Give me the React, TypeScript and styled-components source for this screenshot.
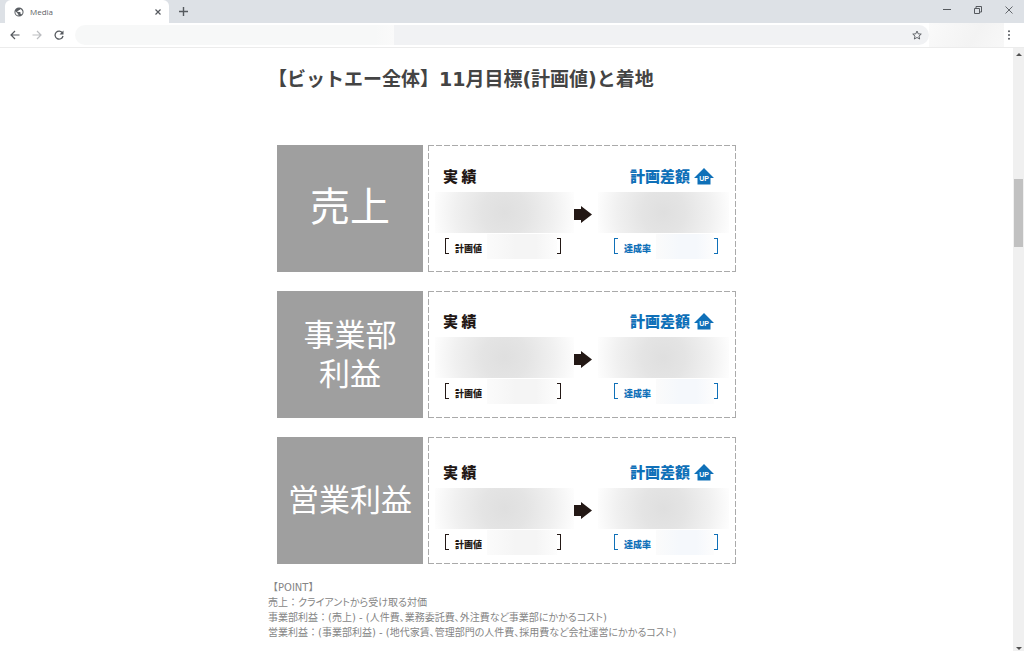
import React from 'react';
import styled, { createGlobalStyle } from 'styled-components';

const GlobalStyle = createGlobalStyle`
  *, *::before, *::after { box-sizing: border-box; }
  html, body, #root { height: 100%; margin: 0; }
  body { background: #fff; font-family: "Noto Sans CJK JP", sans-serif; }
  button, input { font: inherit; }
`;

const Browser = styled.div`
  display: flex;
  flex-direction: column;
  height: 100%;
  overflow: hidden;
`;

const TabStrip = styled.header`
  display: flex;
  align-items: stretch;
  height: 23px;
  flex: none;
  padding-left: 5px;
  background: #dde1e6;
`;

const Tab = styled.div`
  display: flex;
  align-items: center;
  gap: 6px;
  width: 164px;
  padding: 0 5px 0 9px;
  border-radius: 6px 6px 0 0;
  background: #fff;
`;

const TabTitle = styled.span`
  flex: 1;
  font: 8px/12px "Open Sans", sans-serif;
  color: #5f6368;
`;

const IconButton = styled.button<{ $width: number; $color?: string }>`
  display: flex;
  align-items: center;
  justify-content: center;
  flex: none;
  width: ${(p) => p.$width}px;
  height: 100%;
  padding: 0;
  border: 0;
  background: none;
  color: ${(p) => p.$color ?? '#55595e'};
`;

const WindowControls = styled.div`
  display: flex;
  height: 20px;
  margin-left: auto;
`;

const Toolbar = styled.nav`
  display: flex;
  align-items: center;
  height: 25px;
  flex: none;
  padding-left: 4px;
  border-bottom: 1px solid #ececec;
  background: #fff;
`;

const AddressBar = styled.div`
  display: flex;
  align-items: center;
  flex: 1;
  height: 20px;
  margin-left: 5px;
  border-radius: 10px;
  overflow: hidden;
  background: linear-gradient(90deg, #f7f8f8 300px, #fafafa 319px, #f1f2f4 319px);
`;

const AddressInput = styled.input`
  flex: 1;
  min-width: 0;
  border: 0;
  padding: 0 8px;
  background: none;
`;

const Extensions = styled.div`
  align-self: stretch;
  width: 75px;
  background: linear-gradient(120deg, #fafafa, #f3f3f3 60%, #f8f8f8);
`;

const Viewport = styled.div`
  display: flex;
  flex: 1;
  min-height: 0;
`;

const Page = styled.main`
  flex: 1;
  min-width: 0;
  overflow: hidden;
`;

const Article = styled.article`
  max-width: 477px;
  margin: 0 auto;
`;

const Heading = styled.h1`
  margin: 0;
  padding-top: 16px;
  font: bold 19px/30px "DejaVu Sans", "Noto Sans CJK JP", sans-serif;
  white-space: nowrap;
  color: #444;
`;

const Rows = styled.div`
  display: flex;
  flex-direction: column;
  gap: 19px;
  padding: 51px 9px 16px;
`;

const Row = styled.section`
  display: flex;
  gap: 5px;
`;

const Label = styled.h2<{ $size: number }>`
  display: flex;
  align-items: center;
  justify-content: center;
  flex: none;
  width: 146px;
  height: 127px;
  margin: 0;
  padding-bottom: ${(p) => (p.$size > 31 ? 8 : 6)}px;
  background: #9f9f9f;
  color: #fff;
  font-size: ${(p) => p.$size}px;
  line-height: 39px;
  font-weight: 400;
  text-align: center;
  white-space: pre-line;
`;

const across = 'repeating-linear-gradient(90deg, #aaa 0 6px, #fff 6px 8px)';
const down = 'repeating-linear-gradient(180deg, #aaa 0 6px, #fff 6px 8px)';

const Panel = styled.div<{ $top: number }>`
  display: flex;
  align-items: flex-start;
  flex: 1;
  padding: ${(p) => p.$top}px 7px 0;
  background:
    ${across} 0 0 / 100% 1px no-repeat,
    ${across} 0 100% / 100% 1px no-repeat,
    ${down} 0 0 / 1px 100% no-repeat,
    ${down} 100% 0 / 1px 100% no-repeat;
`;

const Figure = styled.div<{ $color: string; $basis: number }>`
  flex: 1 1 ${(p) => p.$basis}px;
  color: ${(p) => p.$color};
`;

const FigureTitle = styled.h3<{ $indent: number }>`
  display: flex;
  align-items: center;
  gap: 4px;
  height: 20px;
  margin: 0;
  padding-left: ${(p) => p.$indent}px;
  font-size: 15px;
  line-height: 20px;
  font-weight: 900;
  white-space: nowrap;
`;

const HiddenAmount = styled.div`
  height: 41px;
  margin-top: 6px;
  background: radial-gradient(ellipse 54% 190% at 50% 50%, #dfdfdf, #e4e4e4 30%, #f0f0f0 65%, #fbfbfb 90%, #fff);
`;

const Bracket = styled.div<{ $indent: number; $width: number }>`
  display: flex;
  align-items: center;
  width: ${(p) => p.$width}px;
  height: 16px;
  margin: 5px 0 0 ${(p) => p.$indent}px;
`;

const Edge = styled.span<{ $side: 'left' | 'right' }>`
  width: 4px;
  height: 100%;
  border: 1px solid currentColor;
  border-${(p) => (p.$side === 'left' ? 'right' : 'left')}: 0;
`;

const BracketText = styled.span`
  padding: 5px 5px 0 6px;
  font-size: 9px;
  line-height: 12px;
  font-weight: 900;
  white-space: nowrap;
`;

const HiddenRate = styled.span<{ $tint: string }>`
  flex: 1;
  height: 25px;
  background: linear-gradient(90deg, #fbfbfb, ${(p) => p.$tint} 40%, ${(p) => p.$tint} 70%, #fdfdfd);
`;

const ArrowCell = styled.div`
  flex: none;
  width: 24px;
  padding-top: 38px;
`;

const Notes = styled.div`
  font: 10px/15px "DejaVu Sans", "Noto Sans CJK JP", sans-serif;
  color: #858585;
`;

const Note = styled.p`
  margin: 0;
  font-feature-settings: "palt";
`;

const Term = styled.span`
  font-feature-settings: normal;
`;

const Scrollbar = styled.div`
  display: flex;
  flex-direction: column;
  align-items: center;
  flex: none;
  width: 11px;
  padding: 4px 0 0;
  background: #f0f0f0;
`;

const Thumb = styled.div`
  width: 9px;
  height: 68px;
  margin: 122px 0 auto;
  background: #c1c1c1;
`;

const Globe = () => (
  <svg width="10" height="10" viewBox="0 0 24 24" aria-hidden="true">
    <path fill="#5a5e63" d="M12 1a11 11 0 1 0 0 22 11 11 0 0 0 0-22zm-1 19.5A8.6 8.6 0 0 1 3.400 12c0-.6.1-1.200.2-1.800L9 15.500v1c0 1.200 1 2 2 2zm7.500-2.700c-.3-.9-1.100-1.500-2.100-1.500h-1v-3.200c0-.6-.5-1-1-1H8V10h2c.6 0 1-.5 1-1V7h2.200c1.200 0 2-1 2-2v-.5a8.600 8.600 0 0 1 3.300 13.300z" />
  </svg>
);

const strokeIcon = { fill: 'none', stroke: 'currentColor', 'aria-hidden': true } as const;

const UpBadge = () => (
  <svg width="20" height="17" viewBox="0 0 20 17" role="img" aria-label="UP">
    <path fill="#0f70b8" d="M10 0 20 10h-3.500v6.500h-13V10H0z" />
    <text x="10" y="13" fontFamily="Liberation Sans" fontSize="7" fontWeight="700" textAnchor="middle" fill="#fff">UP</text>
  </svg>
);

const ArrowIcon = () => (
  <svg width="18" height="17" viewBox="0 0 18 17" aria-hidden="true">
    <path fill="#231815" d="M0 3h7V0l11 8.500L7 17v-3H0z" />
  </svg>
);

const results = [
  { label: '売上', size: 40, top: 21 },
  { label: '事業部\n利益', size: 31, top: 20 },
  { label: '営業利益', size: 31, top: 25 },
];

const notes = [
  { term: '【POINT】', text: '' },
  { term: '売上：', text: 'クライアントから受け取る対価' },
  { term: '事業部利益：', text: '(売上) - (人件費、業務委託費、外注費など事業部にかかるコスト)' },
  { term: '営業利益：', text: '(事業部利益) - (地代家賃、管理部門の人件費、採用費など会社運営にかかるコスト)' },
];

export default function App() {
  return (
    <Browser>
      <GlobalStyle />
      <TabStrip>
        <Tab>
          <Globe />
          <TabTitle>Media</TabTitle>
          <IconButton $width={12} aria-label="Close tab">
            <svg width="6" height="6" viewBox="0 0 6 6" {...strokeIcon}><path d="M.5.5l5 5M5.500.5l-5 5" strokeWidth="1.200" /></svg>
          </IconButton>
        </Tab>
        <IconButton $width={29} aria-label="New tab">
          <svg width="9" height="9" viewBox="0 0 9 9" {...strokeIcon}><path d="M4.500 0v9M0 4.500h9" strokeWidth="1.400" /></svg>
        </IconButton>
        <WindowControls>
          <IconButton $width={31} aria-label="Minimize">
            <svg width="8" height="8" viewBox="0 0 8 8" {...strokeIcon}><path d="M0 3.500h8" /></svg>
          </IconButton>
          <IconButton $width={31} aria-label="Restore">
            <svg width="8" height="8" viewBox="0 0 8 8" {...strokeIcon}><path d="M.5 2.500h5v5h-5zM2 2V.5h5.500v5.500H6" /></svg>
          </IconButton>
          <IconButton $width={31} aria-label="Close">
            <svg width="8" height="8" viewBox="0 0 8 8" {...strokeIcon}><path d="M.5.5l7 7M7.500.5l-7 7" strokeWidth=".9" /></svg>
          </IconButton>
        </WindowControls>
      </TabStrip>
      <Toolbar>
        <IconButton $width={22} aria-label="Back">
          <svg width="10" height="10" viewBox="0 0 10 10" {...strokeIcon}><path d="M9.500 5H1M5 1 1 5l4 4" strokeWidth="1.200" /></svg>
        </IconButton>
        <IconButton $width={22} $color="#bbbdc0" aria-label="Forward">
          <svg width="10" height="10" viewBox="0 0 10 10" {...strokeIcon}><path d="M.5 5H9M5 1l4 4-4 4" strokeWidth="1.200" /></svg>
        </IconButton>
        <IconButton $width={22} aria-label="Reload">
          <svg width="10" height="10" viewBox="0 0 10 10" {...strokeIcon}><path d="M8.500 3A4 4 0 1 0 9 6" strokeWidth="1.300" /><path d="M9.500.5v4h-4z" fill="currentColor" stroke="none" /></svg>
        </IconButton>
        <AddressBar>
          <AddressInput aria-label="Address" />
          <IconButton $width={24} aria-label="Bookmark">
            <svg width="10" height="10" viewBox="0 0 24 24" {...strokeIcon}><path d="m12 2.500 2.900 6.700 7.300.6-5.500 4.800 1.700 7.100L12 17.900l-6.400 3.800 1.700-7.100L1.800 9.800l7.300-.6z" strokeWidth="2.200" /></svg>
          </IconButton>
        </AddressBar>
        <Extensions />
        <IconButton $width={20} aria-label="Menu">
          <svg width="20" height="10" viewBox="0 0 20 10" fill="currentColor" aria-hidden="true"><circle cx="5" cy="1.200" r="1" /><circle cx="5" cy="5" r="1" /><circle cx="5" cy="8.800" r="1" /></svg>
        </IconButton>
      </Toolbar>
      <Viewport>
        <Page>
          <Article>
            <Heading>【ビットエー全体】11月目標(計画値)と着地</Heading>
            <Rows>
              {results.map((r) => (
                <Row key={r.label}>
                  <Label $size={r.size}>{r.label}</Label>
                  <Panel $top={r.top}>
                    <Figure $color="#231815" $basis={139}>
                      <FigureTitle $indent={8}>実 績</FigureTitle>
                      <HiddenAmount />
                      <Bracket $indent={10} $width={116}>
                        <Edge $side="left" />
                        <BracketText>計画値</BracketText>
                        <HiddenRate $tint="#f5f5f5" />
                        <Edge $side="right" />
                      </Bracket>
                    </Figure>
                    <ArrowCell><ArrowIcon /></ArrowCell>
                    <Figure $color="#0f70b8" $basis={131}>
                      <FigureTitle $indent={32}>計画差額<UpBadge /></FigureTitle>
                      <HiddenAmount />
                      <Bracket $indent={16} $width={104}>
                        <Edge $side="left" />
                        <BracketText>達成率</BracketText>
                        <HiddenRate $tint="#f5f8fc" />
                        <Edge $side="right" />
                      </Bracket>
                    </Figure>
                  </Panel>
                </Row>
              ))}
            </Rows>
            <Notes>
              {notes.map((n) => (
                <Note key={n.term}><Term>{n.term}</Term>{n.text}</Note>
              ))}
            </Notes>
          </Article>
        </Page>
        <Scrollbar>
          <svg width="6" height="5" viewBox="0 0 6 5" aria-hidden="true"><path d="M0 4 3 1l3 3z" fill="#505050" /></svg>
          <Thumb />
          <svg width="6" height="5" viewBox="0 0 6 5" aria-hidden="true"><path d="m0 1 3 3 3-3z" fill="#505050" /></svg>
        </Scrollbar>
      </Viewport>
    </Browser>
  );
}
